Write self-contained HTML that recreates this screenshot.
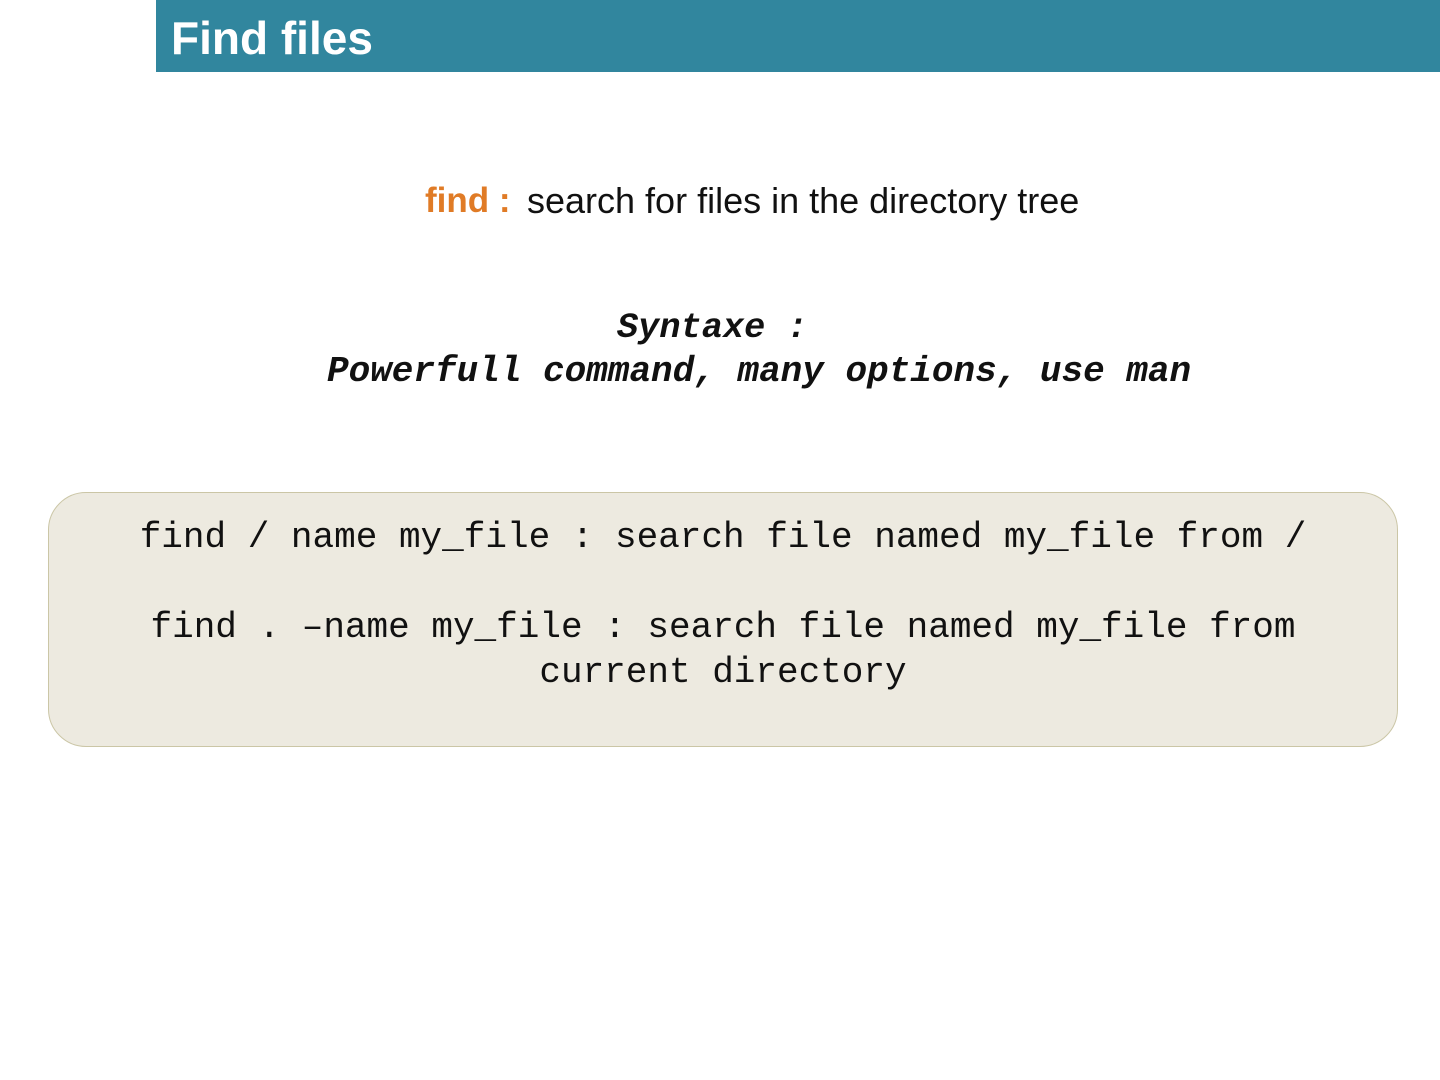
<!DOCTYPE html>
<html><head><style>
body{margin:0;width:1440px;height:1080px;background:#fff;position:relative;overflow:hidden;font-family:"Liberation Sans",sans-serif}
.hdr{position:absolute;left:156px;top:0;width:1284px;height:72px;background:#31869e}
.hdr span{position:absolute;left:15px;top:11px;color:#fff;font-size:46px;line-height:54px;font-weight:bold}
.l1{position:absolute;top:180px;font-size:36px;color:#111;white-space:nowrap;line-height:42px}
.syn{position:absolute;white-space:nowrap;font-family:"Liberation Mono",monospace;font-weight:bold;font-style:italic;color:#111;line-height:40px}
.box{position:absolute;left:48px;top:492px;width:1348px;height:253px;background:#edeae0;border:1.5px solid #cbc6a6;border-radius:38px;font-family:"Liberation Mono",monospace;color:#111;text-align:center;line-height:45px}
</style></head><body>
<div class="hdr"><span>Find files</span></div>
<div class="l1" style="left:425px;color:#e07b26;font-size:35px;font-weight:bold">find :</div>
<div class="l1" style="left:527px">search for files in the directory tree</div>
<div class="syn" style="top:308px;left:617px;font-size:35.3px">Syntaxe :</div>
<div class="syn" style="top:352px;left:327px;font-size:36px">Powerfull command, many options, use man</div>
<div class="box"><div style="margin-top:22px;font-size:36px">find / name my_file : search file named my_file from /</div><div style="margin-top:45px;font-size:36px">find . –name my_file : search file named my_file from<br>current directory</div></div>
</body></html>
